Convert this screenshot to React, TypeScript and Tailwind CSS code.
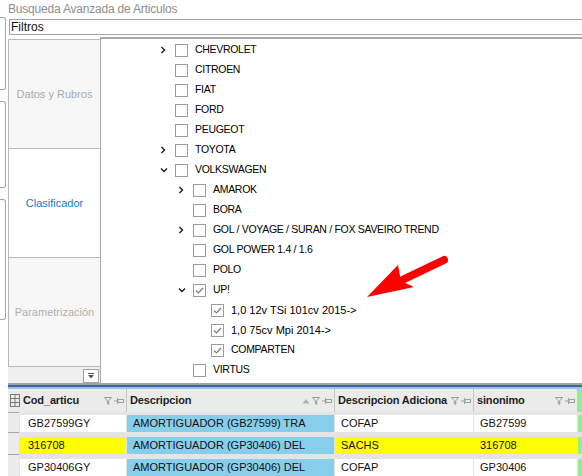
import React from 'react';

type TreeNode = { label: string; level: 0 | 1 | 2; chevron?: 'right' | 'down'; checked?: boolean };

const nodes: TreeNode[] = [
  { label: 'CHEVROLET', level: 0, chevron: 'right' },
  { label: 'CITROEN', level: 0 },
  { label: 'FIAT', level: 0 },
  { label: 'FORD', level: 0 },
  { label: 'PEUGEOT', level: 0 },
  { label: 'TOYOTA', level: 0, chevron: 'right' },
  { label: 'VOLKSWAGEN', level: 0, chevron: 'down' },
  { label: 'AMAROK', level: 1, chevron: 'right' },
  { label: 'BORA', level: 1 },
  { label: 'GOL / VOYAGE / SURAN / FOX SAVEIRO TREND', level: 1, chevron: 'right' },
  { label: 'GOL POWER 1.4 / 1.6', level: 1 },
  { label: 'POLO', level: 1 },
  { label: 'UP!', level: 1, chevron: 'down', checked: true },
  { label: '1,0 12v TSi 101cv 2015->', level: 2, checked: true },
  { label: '1,0 75cv Mpi 2014->', level: 2, checked: true },
  { label: 'COMPARTEN', level: 2, checked: true },
  { label: 'VIRTUS', level: 1 },
];

const indent = { 0: 'pl-[57px]', 1: 'pl-[75px]', 2: 'pl-[93px]' };

const rows = [
  { cod: 'GB27599GY', desc: 'AMORTIGUADOR (GB27599) TRA', ad: 'COFAP', sin: 'GB27599', hl: false },
  { cod: '316708', desc: 'AMORTIGUADOR (GP30406) DEL', ad: 'SACHS', sin: '316708', hl: true },
  { cod: 'GP30406GY', desc: 'AMORTIGUADOR (GP30406) DEL', ad: 'COFAP', sin: 'GP30406', hl: false },
];

const Chevron = ({ dir }: { dir?: 'right' | 'down' }) => (
  <svg width="17" height="20" viewBox="0 0 17 20" className="shrink-0">
    {dir === 'right' && <polyline points="3.5,7 6.5,10 3.5,13" fill="none" stroke="#1a1a1a" strokeWidth="1.4" />}
    {dir === 'down' && <polyline points="3,8.5 6,11.5 9,8.5" fill="none" stroke="#1a1a1a" strokeWidth="1.4" />}
  </svg>
);

const CheckBox = ({ checked }: { checked?: boolean }) => (
  <span className="w-[13px] h-[13px] border border-[#9c9c9c] bg-white shrink-0 flex items-center justify-center">
    {checked && (
      <svg width="11" height="11" viewBox="0 0 11 11">
        <polyline points="2,5.5 4.5,8 9,3" fill="none" stroke="#7c7c7c" strokeWidth="1.2" />
      </svg>
    )}
  </span>
);

const Funnel = () => (
  <svg width="8" height="8" viewBox="0 0 8 8" className="shrink-0">
    <polygon points="0.5,0.5 7.5,0.5 4.7,3.8 4.7,7.5 3.3,6.6 3.3,3.8" fill="none" stroke="#9a9a9a" strokeWidth="1" />
  </svg>
);

const Pin = () => (
  <svg width="10" height="8" viewBox="0 0 10 8" className="shrink-0">
    <line x1="0" y1="4" x2="3" y2="4" stroke="#a0a0a0" />
    <line x1="3.5" y1="1" x2="3.5" y2="7" stroke="#a0a0a0" />
    <rect x="4" y="2.5" width="5.5" height="3" fill="none" stroke="#a0a0a0" />
  </svg>
);

const SortUp = () => (
  <svg width="8" height="6" viewBox="0 0 8 6" className="shrink-0">
    <polygon points="0.5,5.5 4,1 7.5,5.5" fill="#b0b0b0" />
  </svg>
);

const HeaderCell = ({ label, width, sort }: { label: string; width: string; sort?: boolean }) => (
  <div className={`${width} h-full flex items-center border-r border-[#c4c4c4] pl-[3px] pr-[2px] gap-[2px]`}>
    <span className="flex-1 whitespace-nowrap font-bold text-[11px] tracking-[-0.15px] text-[#1e1e1e]">{label}</span>
    {sort && <SortUp />}
    <Funnel />
    <Pin />
  </div>
);

export default function App() {
  return (
    <div className="relative w-[582px] h-[476px] overflow-hidden bg-white flex font-['Liberation_Sans',Arial,sans-serif]">
      {/* brackets of the parent panel */}
      <div className="w-[8px] shrink-0 flex flex-col">
        <div className="mt-[17px] h-[73px] w-[6px] border-y border-r border-[#a4a4a4] rounded-r-[3px]" />
        <div className="mt-[11px] h-[87px] w-[6px] border-y border-r border-[#a4a4a4] rounded-r-[3px]" />
        <div className="mt-[11px] h-[121px] w-[6px] border-y border-r border-[#a4a4a4] rounded-r-[3px]" />
      </div>

      <div className="flex-1 flex flex-col min-w-0">
        <div className="h-[19px] text-[12px] leading-[18px] text-[#8e8e8e] tracking-[-0.2px]">Busqueda Avanzada de Articulos</div>
        <div className="ml-[1px] h-[16px] border-y border-l border-[#a5a5a5] text-[12px] leading-[14px] pl-[1px] text-[#111]">Filtros</div>

        <div className="mt-[2px] h-[348px] flex border-b-2 border-[#a3a3a3]">
          <div className="w-[92px] shrink-0 flex flex-col pt-[2px]">
            <div className="h-[110px] border-t border-b border-l border-[#b9b9b9] bg-[#f7f7f7] flex items-center justify-center text-[11px] text-[#a9a9a9]">
              Datos y Rubros
            </div>
            <div className="h-[109px] border-b border-l border-[#b9b9b9] bg-white flex items-center justify-center text-[11px] text-[#1979ca]">
              Clasificador
            </div>
            <div className="h-[109px] border-b border-l border-[#b9b9b9] bg-[#f7f7f7] flex items-center justify-center text-[11px] text-[#b0b0b0]">
              Parametrización
            </div>
            <div className="flex-1 bg-[#f0f0f0] flex items-end justify-end pr-[1px]">
              <div className="w-[16px] h-[14px] border border-[#a0a0a0] bg-white flex items-center justify-center">
                <svg width="8" height="6" viewBox="0 0 8 6">
                  <line x1="1" y1="0.5" x2="7" y2="0.5" stroke="#555" />
                  <polygon points="1,2 7,2 4,5.5" fill="#555" />
                </svg>
              </div>
            </div>
          </div>

          <div className="flex-1 bg-white border-t-2 border-l border-[#a9a9a9] overflow-hidden pt-[1px]">
            {nodes.map((n) => (
              <div key={n.label} className={`flex items-center h-[20px] ${indent[n.level]}`}>
                <Chevron dir={n.chevron} />
                <CheckBox checked={n.checked} />
                <span
                  className={`ml-[7px] whitespace-nowrap text-black ${
                    /[a-z]/.test(n.label) ? 'text-[11px]' : 'text-[10.5px] tracking-[-0.3px]'
                  }`}
                >
                  {n.label}
                </span>
              </div>
            ))}
          </div>
        </div>

        {/* grid */}
        <div className="h-[2px] bg-[#3767a8]" />
        <div className="h-[2px] bg-[#9dc0ec]" />
        <div className="h-[23px] flex bg-[#ebebeb]">
          <div className="w-[12px] h-full flex items-center justify-end">
            <svg width="10" height="13" viewBox="0 0 10 13">
              <rect x="0.5" y="0.5" width="9" height="12" fill="none" stroke="#7a7a7a" />
              <line x1="0" y1="4.5" x2="10" y2="4.5" stroke="#7a7a7a" />
              <line x1="0" y1="8.5" x2="10" y2="8.5" stroke="#7a7a7a" />
              <line x1="5" y1="0" x2="5" y2="13" stroke="#7a7a7a" />
            </svg>
          </div>
          <HeaderCell label="Cod_articu" width="w-[107px]" />
          <HeaderCell label="Descripcion" width="w-[208px]" sort />
          <HeaderCell label="Descripcion Adiciona" width="w-[139px]" />
          <HeaderCell label="sinonimo" width="w-[104px]" />
          <div className="flex-1 bg-[#90ee90]" />
        </div>
        <div className="flex-1 bg-[#e4e4e4] flex flex-col">
          {rows.map((r, i) => (
            <div key={r.cod} className={`flex items-end gap-x-[1px] text-[11px] leading-[17px] text-[#111] ${i === 0 ? 'h-[20px]' : 'h-[22px]'}`}>
              <div className="self-stretch w-[11px] bg-[#ececec] border-t border-[#a5a5a5]" />
              <div className={`w-[106px] h-[17px] pl-[8px] whitespace-nowrap overflow-hidden ${r.hl ? 'bg-[#ffff00]' : 'bg-white'}`}>{r.cod}</div>
              <div className="w-[207px] h-[17px] pl-[6px] whitespace-nowrap overflow-hidden bg-[#87ceeb]">{r.desc}</div>
              <div className={`w-[138px] h-[17px] pl-[6px] whitespace-nowrap overflow-hidden ${r.hl ? 'bg-[#ffff00]' : 'bg-white'}`}>{r.ad}</div>
              <div className={`w-[103px] h-[17px] pl-[6px] whitespace-nowrap overflow-hidden ${r.hl ? 'bg-[#ffff00]' : 'bg-white'}`}>{r.sin}</div>
              <div className="flex-1 h-[17px] bg-[#90ee90]" />
            </div>
          ))}
        </div>
      </div>

      {/* red annotation arrow */}
      <svg className="absolute inset-0 pointer-events-none" width="582" height="476" viewBox="0 0 582 476">
        <line x1="444" y1="260" x2="398" y2="282" stroke="#ff0000" strokeWidth="8" strokeLinecap="round" />
        <polygon points="367,297 398,265 401,281 414,287" fill="#ff0000" />
      </svg>
    </div>
  );
}
